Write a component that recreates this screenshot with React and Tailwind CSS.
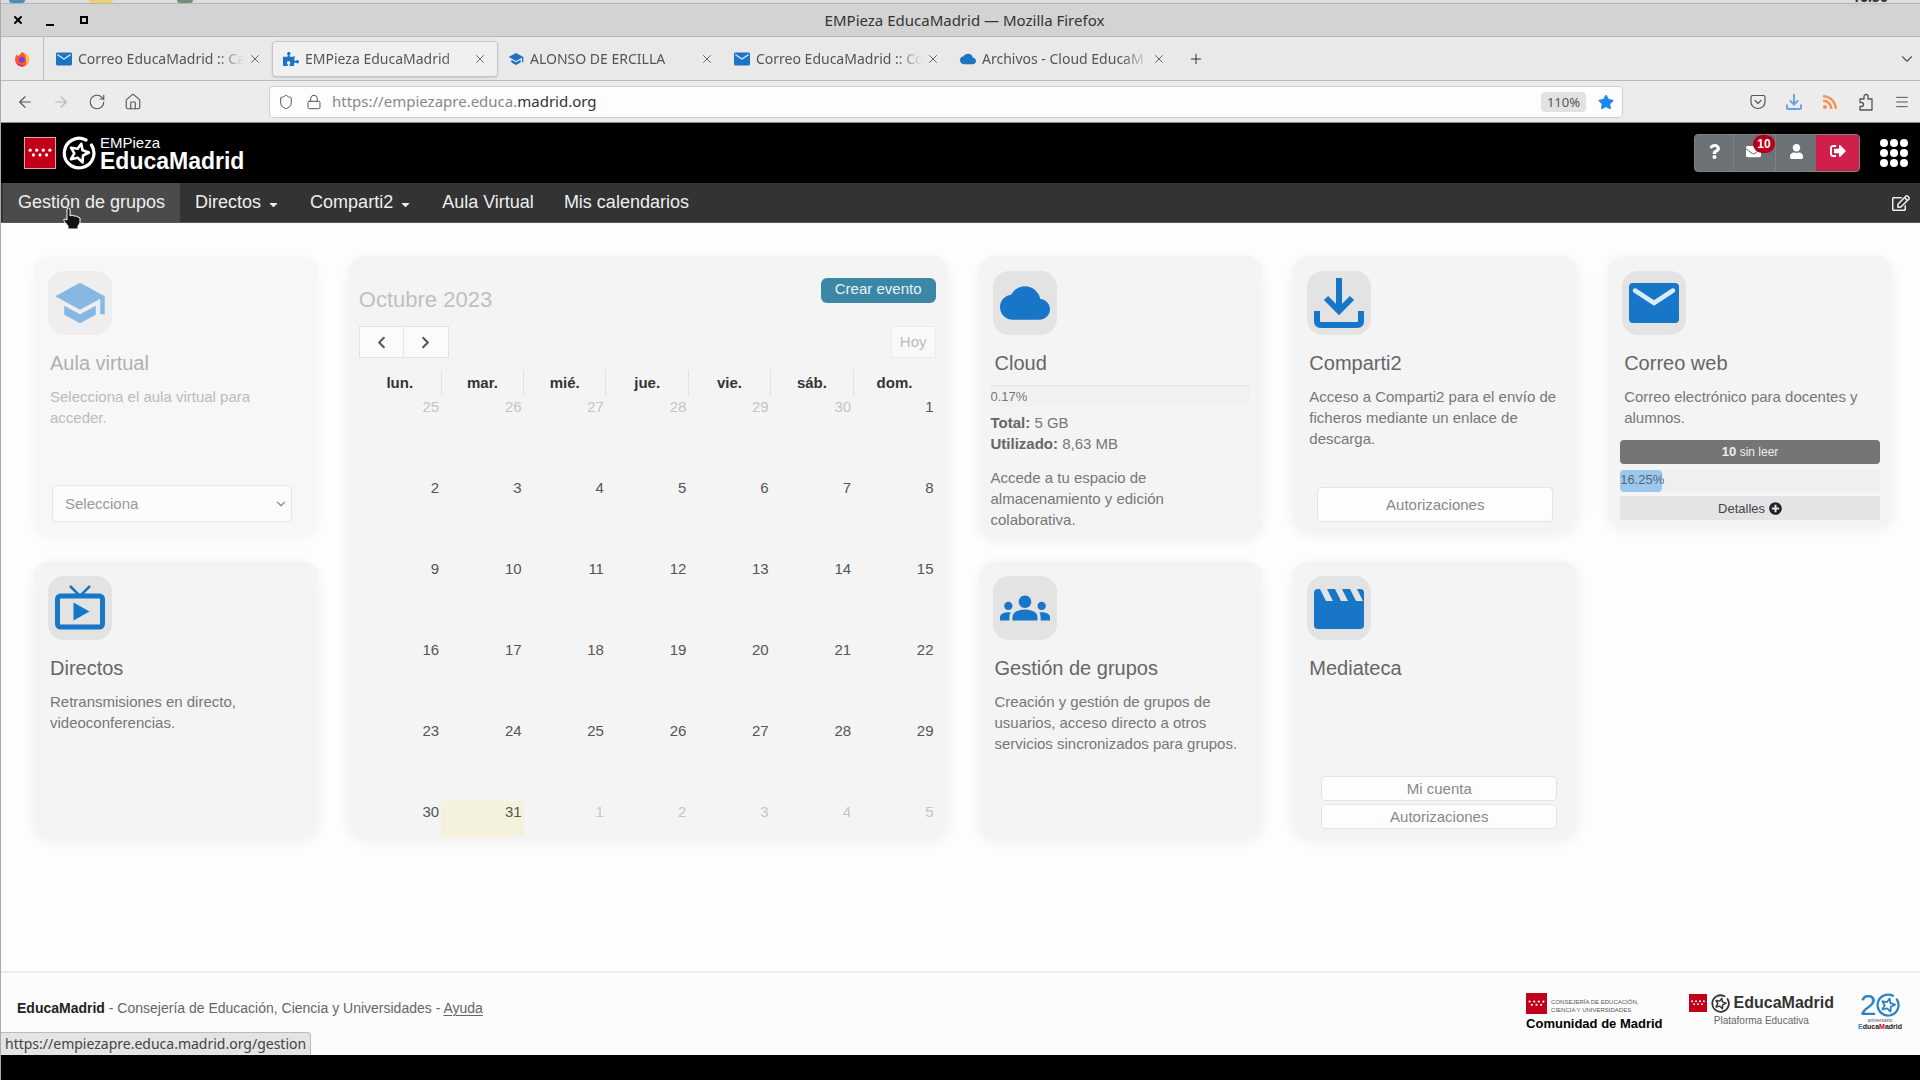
import React from 'react';
import { ArrowLeft, ArrowRight, RotateCw, House, Shield, Lock, Plus, X, ChevronDown, ChevronLeft, ChevronRight, Menu } from 'lucide-react';
import { FaQuestion, FaEnvelope, FaUser, FaSignOutAlt, FaRegEdit, FaPlusCircle, FaStar, FaRss, FaCaretDown, FaPuzzlePiece } from 'react-icons/fa';
import { MdSchool, MdCloud, MdGroups } from 'react-icons/md';

const weekDays = ['lun.', 'mar.', 'mié.', 'jue.', 'vie.', 'sáb.', 'dom.'];

const weeks = [
  [25, 26, 27, 28, 29, 30, 1],
  [2, 3, 4, 5, 6, 7, 8],
  [9, 10, 11, 12, 13, 14, 15],
  [16, 17, 18, 19, 20, 21, 22],
  [23, 24, 25, 26, 27, 28, 29],
  [30, 31, 1, 2, 3, 4, 5],
];

const tabs = [
  { title: 'Correo EducaMadrid :: Ca', icon: MailIcon },
  { title: 'EMPieza EducaMadrid', icon: FaPuzzlePiece, active: true },
  { title: 'ALONSO DE ERCILLA', icon: MdSchool },
  { title: 'Correo EducaMadrid :: Co', icon: MailIcon },
  { title: 'Archivos - Cloud EducaM', icon: MdCloud },
];

const navItems = [
  { label: 'Gestión de grupos', active: true },
  { label: 'Directos', caret: true },
  { label: 'Comparti2', caret: true },
  { label: 'Aula Virtual' },
  { label: 'Mis calendarios' },
];

/* Icons */
function MailIcon({ className }) {
  return (
    <svg viewBox="0 0 50 50" className={className}>
      <rect x="0" y="5" width="50" height="40" rx="4" fill="currentColor" />
      <path d="M6 12.5 25 25 44 12.5" fill="none" stroke="#d9ecfb" strokeWidth="4.5" strokeLinecap="round" />
    </svg>
  );
}

function DownloadIcon({ className }) {
  return (
    <svg viewBox="0 0 50 50" className={className} fill="none" stroke="currentColor" strokeWidth="6">
      <path d="M25 0v33M12 20l13 13 13-13" />
      <path d="M3 33v10q0 4 4 4h36q4 0 4-4V33" />
    </svg>
  );
}

function TvIcon({ className }) {
  return (
    <svg viewBox="0 0 50 50" className={className}>
      <path d="m15 3 10 10L35 3" fill="none" stroke="currentColor" strokeWidth="2.5" />
      <rect x="2.5" y="13" width="45" height="31" rx="3" fill="none" stroke="currentColor" strokeWidth="5" />
      <path d="M18.500 19.500v18l16-9z" fill="currentColor" />
    </svg>
  );
}

function MovieIcon({ className }) {
  return (
    <svg viewBox="0 0 50 50" className={className}>
      <path d="M4 6h2l6 12h7L13 6h8l6 12h7L28 6h8l6 12h7L43 6h3q4 0 4 4v32q0 4-4 4H4q-4 0-4-4V10q0-4 4-4z" fill="currentColor" />
    </svg>
  );
}

function PocketIcon({ className }) {
  return (
    <svg viewBox="0 0 16 16" className={className} fill="none" stroke="currentColor" strokeWidth="1.2" strokeLinecap="round">
      <path d="M2.500 1.500h11q1.500 0 1.500 1.500v5a7 6.500 0 0 1-14 0V3q0-1.500 1.500-1.500z" />
      <path d="m5 6.500 3 3 3-3" />
    </svg>
  );
}

function ExtensionIcon({ className }) {
  return (
    <svg viewBox="0 0 16 18" className={className} fill="none" stroke="currentColor" strokeWidth="1.3" strokeLinejoin="round">
      <path d="M2 6h4V3.500a2 2 0 0 1 4 0V6h4v11H2v-3.500h1.500a2 2 0 0 0 0-4H2z" />
    </svg>
  );
}

function FirefoxIcon({ className }) {
  return (
    <svg viewBox="0 0 16 16" className={className}>
      <path d="M8 1c2 .3 2 2 4 2.500 2.200 1.500 3 3 3 5a7 7 0 0 1-14 0C1 6 2 5 2.500 3.500L4 5c1-.5 2.500-2 4-4z" fill="#ff5a2b" />
      <path d="M10 1.500c3 1 5 4 5 7a7 7 0 0 1-3 5.500c1-4 0-7-2-12.500z" fill="#ffc930" />
      <path d="M2 11a6.500 6.500 0 0 0 10 3.300C9 15 5 14 2 11z" fill="#e31587" />
      <circle cx="7.800" cy="8.800" r="3" fill="#7a3fe0" />
    </svg>
  );
}

function MadridFlag({ className }) {
  return (
    <svg viewBox="0 0 32 32" className={className}>
      <rect width="32" height="32" fill="#c3001a" />
      <g fill="#fff">
        <circle cx="5.500" cy="13" r="1.700" />
        <circle cx="12.500" cy="13" r="1.700" />
        <circle cx="19.500" cy="13" r="1.700" />
        <circle cx="26.500" cy="13" r="1.700" />
        <circle cx="9" cy="18" r="1.700" />
        <circle cx="16" cy="18" r="1.700" />
        <circle cx="23" cy="18" r="1.700" />
      </g>
    </svg>
  );
}

function StarRing({ className }) {
  return (
    <svg viewBox="0 0 34 34" className={className} fill="none" stroke="currentColor">
      <path d="M24 4a14.800 14.800 0 1 0 5.500 5" strokeWidth="3.200" strokeLinecap="round" />
      <path
        d="m19.300 7.800 1.200 6.400 6.500 2.300-6 3-.5 6.900-4.800-4.700-6.700 1.500 3.300-5.900-3.300-5.600 6.600 1.100z"
        strokeWidth="2.600"
        strokeLinejoin="round"
      />
    </svg>
  );
}

/* Browser window */
function DesktopStrip() {
  return (
    <div className="flex h-1 items-end justify-between overflow-hidden border-b border-[#b5b5b5] bg-[#dedcdc]">
      <div className="flex h-full gap-16 pl-2">
        <span className="w-4 rounded-b-full bg-[#4b8dbd]" />
        <span className="w-6 rounded-b-full bg-[#ecd06f]" />
        <span className="w-4 rounded-b-full bg-[#6f8f78]" />
      </div>
      <span className="pr-8 text-sm leading-3 font-bold text-[#333]">16:50</span>
    </div>
  );
}

function TitleBar() {
  return (
    <div className="grid h-[33px] grid-cols-3 items-center border-b border-[#b9b9b9] bg-[#d3d3d3] text-black">
      <div className="flex items-center gap-[22px] pl-[11px]">
        <button aria-label="Cerrar"><X size={12} strokeWidth={4} /></button>
        <button aria-label="Minimizar" className="flex h-3 w-3 items-end"><span className="h-0.5 w-2 bg-black" /></button>
        <button aria-label="Maximizar" className="h-2 w-2 border-2 border-black" />
      </div>
      <p className="pl-2 text-center text-[15px] text-[#333]">EMPieza EducaMadrid — Mozilla Firefox</p>
    </div>
  );
}

function TabBar() {
  return (
    <div className="flex h-11 items-center border-b border-[#b9b9b9] bg-[#e9e9e9]">
      <div className="mr-0.5 flex h-full w-[43px] items-center justify-center border-r border-[#bdbdbd]">
        <FirefoxIcon className="h-4 w-4" />
      </div>
      {tabs.map(({ title, icon: Icon, active }, i) => (
        <div
          key={i}
          className={`flex h-9 w-[226px] items-center rounded px-2.5 ${active ? 'border border-[#c6c6c6] bg-[#f0f0f0] shadow-sm' : ''}`}
        >
          <Icon className="h-4 w-4 shrink-0 text-[#1d74c4]" />
          <span className="ml-1.5 flex-1 overflow-hidden text-sm whitespace-nowrap text-[#555] [mask-image:linear-gradient(to_right,black_85%,transparent)]">
            {title}
          </span>
          <button aria-label="Cerrar pestaña" className="ml-1 text-[#555]"><X size={14} strokeWidth={1.5} /></button>
        </div>
      ))}
      <button aria-label="Nueva pestaña" className="ml-3 text-[#333]"><Plus size={16} strokeWidth={1.5} /></button>
      <button aria-label="Lista de pestañas" className="mr-1 ml-auto text-[#555]"><ChevronDown size={18} strokeWidth={1.5} /></button>
    </div>
  );
}

function UrlBar() {
  return (
    <div className="flex h-[42px] items-center border-b border-[#8c8c8c] bg-[#ececec] text-[#555]">
      <div className="flex w-[268px] items-center gap-[18px] pl-[15px]">
        <button aria-label="Atrás"><ArrowLeft size={18} strokeWidth={1.5} /></button>
        <button aria-label="Adelante" className="text-[#b5b5b5]"><ArrowRight size={18} strokeWidth={1.5} /></button>
        <button aria-label="Recargar"><RotateCw size={18} strokeWidth={1.5} /></button>
        <button aria-label="Inicio"><House size={18} strokeWidth={1.5} /></button>
      </div>
      <div className="flex h-8 flex-1 items-center rounded border border-[#cfcfcf] bg-[#fdfdfd] px-2">
        <Shield size={16} strokeWidth={1.5} />
        <Lock size={16} strokeWidth={1.5} className="ml-3" />
        <p className="ml-2.5 flex-1 text-[15px] text-[#888]">
          https://empiezapre.educa.<span className="text-[#333]">madrid.org</span>
        </p>
        <span className="rounded-sm bg-[#e2e2e2] px-1.5 text-[13px] leading-5">110%</span>
        <FaStar className="ml-3 h-4 w-4 text-[#1b87f0]" />
      </div>
      <div className="flex w-[297px] items-center justify-end gap-5 pr-2.5">
        <PocketIcon className="h-4 w-4" />
        <DownloadIcon className="h-4 w-4 text-[#6b9fe8]" />
        <FaRss className="h-4 w-4 text-[#f0955a]" />
        <ExtensionIcon className="h-[18px] w-4" />
        <button aria-label="Menú"><Menu size={16} strokeWidth={1.5} /></button>
      </div>
    </div>
  );
}

/* Site header */
function SiteHeader() {
  return (
    <header className="flex h-[60px] items-center justify-between bg-black pr-3 pl-[23px] text-white">
      <a href="#inicio" className="flex items-center">
        <MadridFlag className="h-8 w-8 border border-[#e3a0a8]" />
        <StarRing className="ml-1.5 h-[34px] w-[34px]" />
        <span className="ml-1 flex flex-col">
          <span className="text-[15px] leading-4">EMPieza</span>
          <span className="text-[23px] leading-5 font-bold">EducaMadrid</span>
        </span>
      </a>
      <div className="flex items-center gap-5">
        <div className="flex h-[38px] overflow-hidden rounded border border-[#7d8285] bg-[#6c7175]">
          <button aria-label="Ayuda" className="flex w-[39px] items-center justify-center border-r border-[#7d8285] pb-1"><FaQuestion size={15} /></button>
          <button aria-label="Mensajes" className="relative flex w-[42px] items-center border-r border-[#7d8285] pb-1 pl-3">
            <FaEnvelope size={15} />
            <span className="absolute top-0 right-0 flex h-[18px] w-[22px] items-center justify-center rounded-full bg-[#b5001c] text-xs font-bold">10</span>
          </button>
          <button aria-label="Perfil" className="flex w-10 items-center justify-center pb-1"><FaUser size={15} /></button>
          <button aria-label="Salir" className="flex w-[43px] items-center justify-center bg-[#d11f4b] pb-1"><FaSignOutAlt size={16} /></button>
        </div>
        <button aria-label="Aplicaciones" className="grid grid-cols-3 gap-0.5">
          {Array.from({ length: 9 }, (_, i) => (
            <span key={i} className="h-2 w-2 rounded-full bg-white" />
          ))}
        </button>
      </div>
    </header>
  );
}

function NavBar() {
  return (
    <nav className="relative flex h-10 items-stretch border-b border-[#555] bg-[#333] pl-0.5 text-[18px] text-[#eee]">
      {navItems.map((item) => (
        <a
          key={item.label}
          href="#nav"
          className={`flex items-center px-[15px] ${item.active ? 'bg-[#4b4b4b]' : ''}`}
        >
          {item.label}
          {item.caret && <FaCaretDown size={13} className="mt-1 ml-1.5" />}
        </a>
      ))}
      <button aria-label="Editar" className="mr-2.5 ml-auto"><FaRegEdit size={18} /></button>
      <svg viewBox="0 0 20 24" className="absolute top-6 left-[60px] h-6 w-5">
        <path
          d="M6 2q2-2 3 0v7l2-1 2 1 2 0 2 1 2 1v5l-2 3v3H7v-3l-4-5q-1-2 1-2l2 1z"
          fill="#111"
          stroke="#fff"
          strokeWidth="1"
        />
      </svg>
    </nav>
  );
}

/* Cards */
function Card({ icon: Icon, title, text, className = '', children }) {
  return (
    <section className={`flex flex-col rounded-2xl bg-[#f4f4f4] px-3 pt-[15px] text-[15px] leading-[21px] text-[#777] shadow-[0_4px_14px_rgba(0,0,0,0.06)] ${className}`}>
      <div className="ml-0.5 flex h-16 w-16 items-center justify-center rounded-2xl bg-[#e3e3e4]">
        <Icon className="h-[50px] w-[50px] text-[#1776c8]" />
      </div>
      <h2 className="mt-3.5 px-1 text-xl text-[#666]">{title}</h2>
      {text && <p className="mt-[9px] pl-1">{text}</p>}
      {children}
    </section>
  );
}

function AulaCard() {
  return (
    <section className="flex flex-col rounded-2xl bg-[#f7f7f7] px-3 pt-[15px] text-[15px] leading-[21px] text-[#bbb] shadow-[0_4px_14px_rgba(0,0,0,0.03)]">
      <div className="ml-0.5 flex h-16 w-16 items-center justify-center rounded-2xl bg-[#eee]">
        <MdSchool className="h-[54px] w-[54px] text-[#85b9e2]" />
      </div>
      <h2 className="mt-3.5 px-1 text-xl text-[#b0b0b0]">Aula virtual</h2>
      <label htmlFor="aula" className="mt-[9px] pl-1">Selecciona el aula virtual para acceder.</label>
      <div className="relative mt-auto mr-3.5 mb-3.5 ml-1.5">
        <select id="aula" className="h-[37px] w-full appearance-none rounded-sm border border-[#e6e6e6] bg-[#fcfcfc] px-3 text-[#999]">
          <option>Selecciona</option>
        </select>
        <ChevronDown size={14} className="pointer-events-none absolute top-3 right-1 text-[#888]" />
      </div>
    </section>
  );
}

function Calendar() {
  return (
    <section className="col-span-2 row-span-2 flex flex-col rounded-2xl bg-[#f4f4f4] pt-[22px] pr-3 pl-2.5 text-[#555] shadow-[0_4px_14px_rgba(0,0,0,0.06)]">
      <div className="flex items-start justify-between">
        <h2 className="mt-2 text-[22px] leading-7 text-[#c0c0c0]">Octubre 2023</h2>
        <button className="h-[25px] rounded-md bg-[#3d87a6] px-3.5 pb-1 text-[15px] leading-5 text-[#e6f3f8]">Crear evento</button>
      </div>
      <div className="mt-3 flex justify-between">
        <div className="flex h-8 border border-[#e2e2e2] bg-[#fbfbfb]">
          <button aria-label="Mes anterior" className="flex w-11 items-center justify-center border-r border-[#e6e6e6]"><ChevronLeft size={19} strokeWidth={2.5} /></button>
          <button aria-label="Mes siguiente" className="flex w-11 items-center justify-center"><ChevronRight size={19} strokeWidth={2.5} /></button>
        </div>
        <button className="h-8 border border-[#ececec] bg-[#f9f9f9] px-2 text-[15px] text-[#bbb]">Hoy</button>
      </div>
      <table className="mt-3 w-full flex-1 table-fixed text-[15px]">
        <thead>
          <tr className="h-[26px]">
            {weekDays.map((day) => (
              <th key={day} scope="col" className="border-r border-[#e2e2e2] text-[#333] last:border-r-0">{day}</th>
            ))}
          </tr>
        </thead>
        <tbody>
          {weeks.map((week, row) => (
            <tr key={row} className="h-[81px] last:h-[36px]">
              {week.map((day, col) => {
                const outside = (row === 0 && day > 20) || (row === 5 && day < 10);
                const today = row === 5 && day === 31;
                return (
                  <td key={col} className={`pr-0.5 text-right align-top ${outside ? 'text-[#c4c4c4]' : ''} ${today ? 'bg-[#f4f2dc]' : ''}`}>
                    {day}
                  </td>
                );
              })}
            </tr>
          ))}
        </tbody>
      </table>
    </section>
  );
}

const whiteButton = 'w-full rounded-sm border border-[#e4e4e4] bg-[#fdfdfd] text-center text-[#888]';

function Footer() {
  return (
    <footer className="relative flex h-[84px] items-start justify-between border-t-2 border-[#ececec] bg-[#fcfcfc] pr-[18px] pl-4 text-sm text-[#666]">
      <p className="mt-[25px]">
        <strong className="text-[#222]">EducaMadrid</strong> - Consejería de Educación, Ciencia y Universidades - <a href="#ayuda" className="underline underline-offset-2">Ayuda</a>
      </p>
      <div className="mt-5 flex items-start">
        <div>
          <div className="flex items-end gap-1">
            <MadridFlag className="h-[21px] w-[21px]" />
            <p className="flex flex-col text-[6px] leading-[8px] text-[#555]">
              <span>CONSEJERÍA DE EDUCACIÓN,</span>
              <span>CIENCIA Y UNIVERSIDADES</span>
            </p>
          </div>
          <p className="mt-0.5 text-[13px] leading-4 font-bold text-black">Comunidad de Madrid</p>
        </div>
        <div className="ml-[26px]">
          <div className="flex items-center gap-1 text-[#333]">
            <MadridFlag className="h-[18px] w-[18px]" />
            <StarRing className="h-[19px] w-[19px]" />
            <p className="text-base leading-5 font-bold">EducaMadrid</p>
          </div>
          <p className="mt-0.5 text-center text-[10px] leading-3">Plataforma Educativa</p>
        </div>
        <div className="ml-6 flex flex-col items-center text-[#2e82c4]">
          <div className="flex items-center">
            <span className="text-[30px] leading-6">2</span>
            <StarRing className="h-6 w-6" />
          </div>
          <p className="text-[5px] leading-[6px] text-[#555]">aniversario</p>
          <p className="text-[7px] leading-[8px] font-bold text-[#2e82c4]">E<span className="text-[#222]">duca</span><span className="text-[#c3001a]">M</span><span className="text-[#222]">adrid</span></p>
        </div>
      </div>
      {/* Link target shown by the browser */}
      <div className="absolute bottom-0 left-0 rounded-tr border-t border-r border-[#bbb] bg-[#e4e4e4] px-1 font-['Noto_Sans',sans-serif] text-sm leading-[22px] text-[#444]">
        https://empiezapre.educa.madrid.org/gestion
      </div>
    </footer>
  );
}

export default function App() {
  return (
    <div className="flex min-h-screen flex-col border-l border-[#aaa] bg-[#fdfdfd] font-['Liberation_Sans',Arial,sans-serif]">
      <div className="font-['Noto_Sans',sans-serif]">
        <DesktopStrip />
        <TitleBar />
        <TabBar />
        <UrlBar />
      </div>
      <SiteHeader />
      <NavBar />

      <main className="flex-1 pt-[33px] pr-7 pb-8 pl-[33px]">
        <div className="grid grid-cols-6 gap-x-[31px] gap-y-[25px]">
          <AulaCard />
          <Calendar />

          <Card icon={MdCloud} title="Cloud">
            <div className="mt-2 h-[21px] border-t-2 border-[#e6e6e6] bg-[#f1f1f1] text-[13px] leading-5">0.17%</div>
            <p className="mt-1.5"><strong className="text-[#666]">Total:</strong> 5 GB</p>
            <p><strong className="text-[#666]">Utilizado:</strong> 8,63 MB</p>
            <p className="mt-[13px] mb-1 pr-10">Accede a tu espacio de almacenamiento y edición colaborativa.</p>
          </Card>

          <Card icon={DownloadIcon} title="Comparti2" text="Acceso a Comparti2 para el envío de ficheros mediante un enlace de descarga." className="mb-1.5">
            <div className="mt-auto px-3 pb-2"><button className={`${whiteButton} h-[35px]`}>Autorizaciones</button></div>
          </Card>

          <Card icon={MailIcon} title="Correo web" text="Correo electrónico para docentes y alumnos." className="self-start">
            <button className="mt-3 h-6 rounded bg-[#757575] text-xs text-[#eee]"><strong className="text-[13px]">10</strong> sin leer</button>
            <div className="mt-1.5 h-[22px] bg-[#efefef] text-[13px] leading-5 text-[#567]">
              <div className="h-full rounded-sm bg-[#9cc8ee]" style={{ width: '16.25%' }}>16.25%</div>
            </div>
            <button className="mt-1 mb-1.5 flex h-6 items-center justify-center gap-1 bg-[#e4e4e7] text-[13px] text-[#444]">
              Detalles <FaPlusCircle size={13} className="text-[#222]" />
            </button>
          </Card>

          <Card icon={TvIcon} title="Directos" text="Retransmisiones en directo, videoconferencias." className="min-h-[275px]" />
          <Card icon={MdGroups} title="Gestión de grupos" text="Creación y gestión de grupos de usuarios, acceso directo a otros servicios sincronizados para grupos." />
          <Card icon={MovieIcon} title="Mediateca">
            <div className="mt-auto flex flex-col gap-[3px] pr-2 pb-2 pl-4">
              <button className={`${whiteButton} h-[25px]`}>Mi cuenta</button>
              <button className={`${whiteButton} h-[25px]`}>Autorizaciones</button>
            </div>
          </Card>
        </div>
      </main>

      <Footer />
      <div className="h-[25px] bg-black" />
    </div>
  );
}
